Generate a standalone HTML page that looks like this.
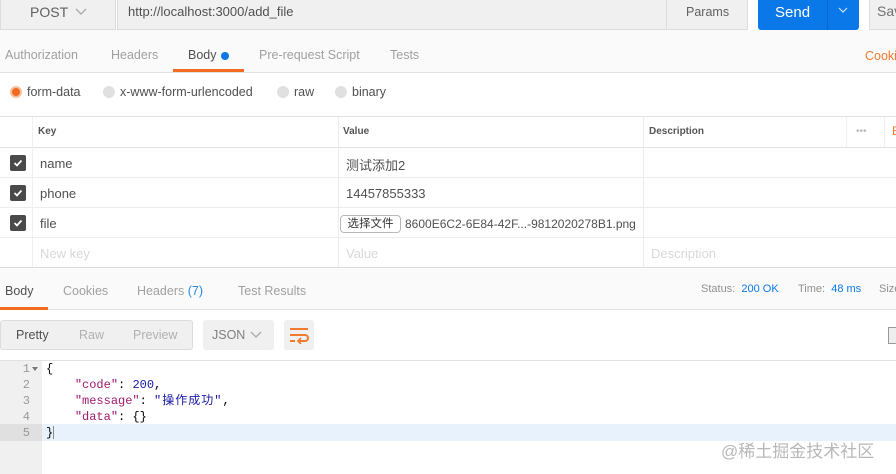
<!DOCTYPE html>
<html><head><meta charset="utf-8"><style>
*{box-sizing:border-box;margin:0;padding:0}
body{width:896px;height:474px;overflow:hidden;background:#fff;font-family:"Liberation Sans","Noto Sans CJK SC",sans-serif;font-size:12px;color:#505050;position:relative}
.a{position:absolute}
.top{left:0;top:0;width:896px;height:30px;background:#fff}
.box{background:#f0f0f0;border:1px solid #dcdcdc;border-top:none}
.tabs{left:0;top:30px;width:896px;height:43px;background:#fafafa;border-bottom:1px solid #e2e2e2}
.t{color:#a0a0a0;font-size:12.5px}
.row{left:0;width:896px;border-bottom:1px solid #ececec}
.cb{width:16px;height:16px;background:#4a4a4a;border-radius:2px;left:10px}
.code{font-family:"Liberation Mono","Noto Sans CJK SC",monospace;font-size:12px;line-height:16px}
.r{font-size:13px}
</style></head><body>
<div class="a top"></div>
<div class="a box" style="left:0;top:0;width:116px;height:30px"></div>
<div class="a" style="left:30px;top:4px;font-size:14px;color:#606060">POST</div>
<svg class="a" style="left:75px;top:6px" width="12" height="10"><path d="M1 3 L6 8 L11 3" stroke="#a8a8a8" fill="none" stroke-width="1.3"/></svg>
<div class="a box" style="left:117px;top:0;width:551px;height:30px"></div>
<div class="a" style="left:128px;top:4px;font-size:13px;color:#505050">http://localhost:3000/add_file</div>
<div class="a box" style="left:666px;top:0;width:82px;height:30px;border-left:1px solid #dcdcdc"></div>
<div class="a" style="left:686px;top:5px;font-size:12.5px;color:#606060">Params</div>
<div class="a" style="left:758px;top:0;width:101px;height:30px;background:#0a78e8;border-radius:0 0 3px 3px"></div>
<div class="a" style="left:827px;top:0;width:1px;height:30px;background:#0a68cc"></div>
<div class="a" style="left:775px;top:4px;font-size:15px;color:#fff">Send</div>
<svg class="a" style="left:837px;top:5px" width="12" height="10"><path d="M2 3 L6 7 L10 3" stroke="#cfe3fa" fill="none" stroke-width="1.2"/></svg>
<div class="a box" style="left:869px;top:0;width:40px;height:30px;border-left:1px solid #dcdcdc"></div>
<div class="a" style="left:877px;top:3px;font-size:14px;color:#707070">Sav</div>

<div class="a tabs"></div>
<div class="a t" style="left:5px;top:48px">Authorization</div>
<div class="a t" style="left:111px;top:48px">Headers</div>
<div class="a" style="left:188px;top:48px;font-size:12.5px;color:#505050">Body</div>
<div class="a" style="left:221px;top:52px;width:8px;height:8px;border-radius:50%;background:#0a78e8"></div>
<div class="a" style="left:173px;top:69px;width:71px;height:3px;background:#f26b21"></div>
<div class="a t" style="left:259px;top:48px">Pre-request Script</div>
<div class="a t" style="left:390px;top:48px">Tests</div>
<div class="a" style="left:865px;top:49px;font-size:12.5px;color:#f07a30">Cookies</div>

<div class="a" style="left:10px;top:86px;width:12px;height:12px;border-radius:50%;background:#f26b21;border:2px solid #f8c0a0"></div>
<div class="a" style="left:27px;top:85px;font-size:12.5px">form-data</div>
<div class="a" style="left:103px;top:86px;width:12px;height:12px;border-radius:50%;background:#e0e0e0"></div>
<div class="a" style="left:120px;top:85px;font-size:12.5px">x-www-form-urlencoded</div>
<div class="a" style="left:277px;top:86px;width:12px;height:12px;border-radius:50%;background:#e0e0e0"></div>
<div class="a" style="left:294px;top:85px;font-size:12.5px">raw</div>
<div class="a" style="left:335px;top:86px;width:12px;height:12px;border-radius:50%;background:#e0e0e0"></div>
<div class="a" style="left:352px;top:85px;font-size:12.5px">binary</div>

<div class="a row" style="top:116px;height:32px;border-top:1px solid #e2e2e2;border-bottom:1px solid #e2e2e2;background:#fff"></div>
<div class="a" style="left:38px;top:126px;font-size:10px;font-weight:bold;color:#555">Key</div>
<div class="a" style="left:343px;top:126px;font-size:10px;font-weight:bold;color:#555">Value</div>
<div class="a" style="left:649px;top:126px;font-size:10px;font-weight:bold;color:#555">Description</div>
<div class="a" style="left:856px;top:126px;font-size:10px;color:#bbb">•••</div>
<div class="a" style="left:892px;top:124px;font-size:12px;color:#f07a30">B</div>
<div class="a" style="left:32px;top:117px;width:1px;height:151px;background:#f0f0f0"></div>
<div class="a" style="left:338px;top:117px;width:1px;height:151px;background:#ececec"></div>
<div class="a" style="left:643px;top:117px;width:1px;height:151px;background:#ececec"></div>
<div class="a" style="left:846px;top:117px;width:1px;height:30px;background:#f0f0f0"></div>
<div class="a" style="left:884px;top:117px;width:1px;height:30px;background:#f0f0f0"></div>
<div class="a row" style="top:148px;height:30px"></div>
<div class="a row" style="top:178px;height:30px"></div>
<div class="a row" style="top:208px;height:30px"></div>
<div class="a row" style="top:238px;height:30px;border-bottom:1px solid #dcdcdc"></div>
<div class="a cb" style="top:155px"></div><svg class="a" style="left:13px;top:158px" width="10" height="10"><path d="M1.5 5 L4 7.5 L8.5 2.5" stroke="#fff" stroke-width="1.8" fill="none"/></svg>
<div class="a cb" style="top:185px"></div><svg class="a" style="left:13px;top:188px" width="10" height="10"><path d="M1.5 5 L4 7.5 L8.5 2.5" stroke="#fff" stroke-width="1.8" fill="none"/></svg>
<div class="a cb" style="top:215px"></div><svg class="a" style="left:13px;top:218px" width="10" height="10"><path d="M1.5 5 L4 7.5 L8.5 2.5" stroke="#fff" stroke-width="1.8" fill="none"/></svg>
<div class="a r" style="left:40px;top:156px">name</div>
<div class="a r" style="left:40px;top:186px">phone</div>
<div class="a r" style="left:40px;top:216px">file</div>
<div class="a r" style="left:40px;top:246px;color:#d8d8d8">New key</div>
<div class="a r" style="left:346px;top:155px">测试添加2</div>
<div class="a r" style="left:346px;top:186px">14457855333</div>
<div class="a" style="left:340px;top:215px;width:61px;height:18px;border:1px solid #b8b8b8;border-radius:4px;background:#fff;font-size:11.5px;color:#333;text-align:center;line-height:16px">选择文件</div>
<div class="a" style="left:405px;top:217px;font-size:12px;color:#505050">8600E6C2-6E84-42F...-9812020278B1.png</div>
<div class="a r" style="left:346px;top:246px;color:#d8d8d8">Value</div>
<div class="a r" style="left:651px;top:246px;color:#d8d8d8">Description</div>

<div class="a" style="left:0;top:269px;width:896px;height:41px;background:#fafafa;border-bottom:1px solid #e2e2e2"></div>
<div class="a" style="left:5px;top:284px;font-size:12.5px;color:#505050">Body</div>
<div class="a" style="left:0;top:307px;width:48px;height:3px;background:#f26b21"></div>
<div class="a t" style="left:63px;top:284px">Cookies</div>
<div class="a t" style="left:137px;top:284px">Headers <span style="color:#2a8ae0">(7)</span></div>
<div class="a t" style="left:238px;top:284px">Test Results</div>
<div class="a" style="left:701px;top:283px;font-size:11px;color:#909090">Status: <span style="color:#0a78e8">&nbsp;200 OK</span></div>
<div class="a" style="left:798px;top:283px;font-size:11px;color:#909090">Time: <span style="color:#0a78e8">&nbsp;48 ms</span></div>
<div class="a" style="left:879px;top:283px;font-size:11px;color:#909090">Size</div>

<div class="a" style="left:0;top:320px;width:193px;height:30px;background:#f0f0f0;border:1px solid #dcdcdc;border-radius:3px"></div>
<div class="a" style="left:16px;top:328px;font-size:12.5px;color:#505050">Pretty</div>
<div class="a" style="left:79px;top:328px;font-size:12.5px;color:#b0b0b0">Raw</div>
<div class="a" style="left:133px;top:328px;font-size:12.5px;color:#b0b0b0">Preview</div>
<div class="a" style="left:203px;top:320px;width:71px;height:30px;background:#f0f0f0;border-radius:3px"></div>
<div class="a" style="left:212px;top:328px;font-size:12.5px;color:#808080">JSON</div>
<svg class="a" style="left:250px;top:330px" width="12" height="10"><path d="M1 2 L6 7 L11 2" stroke="#a8a8a8" fill="none" stroke-width="1.3"/></svg>
<div class="a" style="left:284px;top:320px;width:30px;height:30px;background:#f0f0f0;border-radius:3px"></div>
<svg class="a" style="left:288px;top:326px" width="22" height="18"><path d="M2 3H20M2 9H17a3 3 0 0 1 0 6H11M2 15H7" stroke="#f07a30" stroke-width="2" fill="none"/><path d="M13 12 L10 15 L13 18" stroke="#f07a30" stroke-width="1.6" fill="none"/></svg>
<div class="a" style="left:888px;top:327px;width:8px;height:17px;border:1px solid #999;border-right:none;background:#eee"></div>

<div class="a" style="left:0;top:360px;width:896px;height:1px;background:#e2e2e2"></div>
<div class="a" style="left:0;top:361px;width:42px;height:113px;background:#f0f0f0"></div>
<div class="a" style="left:42px;top:424px;width:854px;height:17px;background:#e8f2fc"></div>
<div class="a" style="left:0;top:424px;width:42px;height:17px;background:#e0e0e0"></div>
<div class="a code" style="left:0;top:361px;width:30px;text-align:right;color:#999">1<br>2<br>3<br>4<br>5</div>
<svg class="a" style="left:32px;top:366px" width="6" height="6"><path d="M0 1H6L3 5Z" fill="#777"/></svg>
<div class="a code" style="left:46px;top:361px;color:#000;white-space:pre">{
    <span style="color:#a11a6f">"code"</span>: <span style="color:#1a1aa6">200</span>,
    <span style="color:#a11a6f">"message"</span>: <span style="color:#1a1aa6;letter-spacing:1px">"操作成功"</span>,
    <span style="color:#a11a6f">"data"</span>: {}
}</div>
<div class="a" style="left:53px;top:426px;width:1px;height:13px;background:#888"></div>
<div class="a" style="left:721px;top:437px;font-size:17px;color:#b8b8b8">@稀土掘金技术社区</div>
</body></html>
